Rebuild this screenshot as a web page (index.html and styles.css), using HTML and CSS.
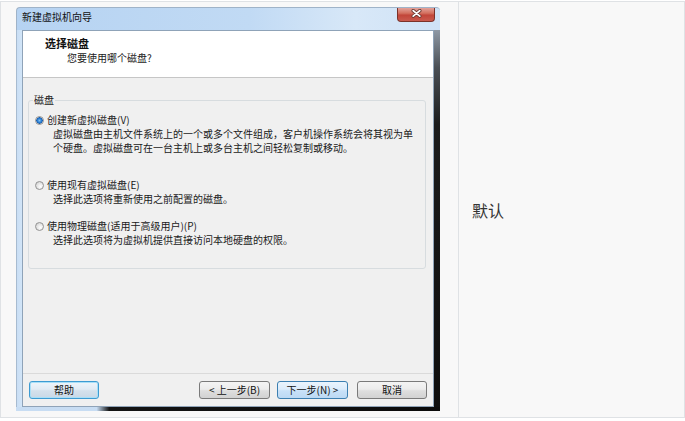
FILE: index.html
```html
<!DOCTYPE html>
<html lang="zh-CN">
<head>
<meta charset="utf-8">
<link rel="stylesheet" href="styles.css">
</head>
<body>
<div class="tbl">
  <div class="cell cell-img">
    <div class="window">
      <div class="titlebar">
        <span class="title">新建虚拟机向导</span>
        <div class="close">
          <svg width="11" height="9" viewBox="0 0 11 9">
            <path d="M2.2 1.6 L8.8 7.2 M8.8 1.6 L2.2 7.2" stroke="#6b3a34" stroke-width="3.4" stroke-linecap="round"/>
            <path d="M2.2 1.6 L8.8 7.2 M8.8 1.6 L2.2 7.2" stroke="#ffffff" stroke-width="1.7" stroke-linecap="round"/>
          </svg>
        </div>
      </div>
      <div class="frame-row">
        <div class="frame-left"></div>
        <div class="client">
          <div class="header">
            <div class="h-title">选择磁盘</div>
            <div class="h-sub">您要使用哪个磁盘?</div>
          </div>
          <div class="body">
            <fieldset class="group">
              <legend>磁盘</legend>
              <div class="opt opt1"><span class="radio checked"></span><span>创建新虚拟磁盘(V)</span></div>
              <div class="desc">虚拟磁盘由主机文件系统上的一个或多个文件组成，客户机操作系统会将其视为单<br>个硬盘。虚拟磁盘可在一台主机上或多台主机之间轻松复制或移动。</div>
              <div class="opt opt2"><span class="radio"></span><span>使用现有虚拟磁盘(E)</span></div>
              <div class="desc">选择此选项将重新使用之前配置的磁盘。</div>
              <div class="opt opt3"><span class="radio"></span><span>使用物理磁盘(适用于高级用户)(P)</span></div>
              <div class="desc">选择此选项将为虚拟机提供直接访问本地硬盘的权限。</div>
            </fieldset>
          </div>
          <div class="footer">
            <div class="btn btn-focus btn-help">帮助</div>
            <div class="spacer"></div>
            <div class="btn btn-back">&lt; 上一步(B)</div>
            <div class="btn btn-default btn-next">下一步(N) &gt;</div>
            <div class="btn btn-cancel">取消</div>
          </div>
        </div>
        <div class="frame-right"></div>
      </div>
      <div class="frame-bottom"></div>
    </div>
  </div>
  <div class="cell cell-text">默认</div>
</div>
</body>
</html>
```

FILE: styles.css
```css
* { box-sizing: border-box; }
html, body { margin: 0; padding: 0; background: #ffffff; }
body { font-family: "Noto Sans CJK SC", "Microsoft YaHei", sans-serif; color: #1a1a1a; }

.tbl {
  display: grid;
  grid-template-columns: 458px 226px;
  width: 685px;
  margin-top: 1px;
  border-top: 1px solid #dfe2e5;
  border-left: 1px solid #dfe2e5;
}
.cell {
  background: #f8f8f8;
  border-right: 1px solid #dfe2e5;
  border-bottom: 1px solid #dfe2e5;
  height: 416px;
}
.cell-img { padding: 5px 0 0 15px; }
.cell-text {
  display: flex;
  align-items: center;
  padding-left: 13px;
  font-size: 16px;
  color: #333333;
}

/* window */
.window { width: 424px; display: flex; flex-direction: column; }
.titlebar {
  height: 23px;
  display: flex;
  justify-content: space-between;
  align-items: flex-start;
  border-top: 1px solid #9fb3c8;
  border-left: 1px solid #9fb3c8;
  border-radius: 4px 4px 0 0;
  background: linear-gradient(to right, #b6d3f2 0%, #c1daf4 55%, #d8e8f8 80%, #cfe2f6 100%);
}
.title {
  font-size: 10px;
  line-height: 14px;
  padding: 2px 0 0 5px;
  color: #101010;
}
.close {
  width: 38px;
  height: 14px;
  margin-right: 5px;
  border: 1px solid #7c3229;
  border-top: none;
  border-radius: 0 0 4px 4px;
  background: linear-gradient(#e3a29a 0%, #d3705f 40%, #c2463a 55%, #c95a4e 100%);
  display: flex;
  align-items: center;
  justify-content: center;
  padding-bottom: 2px;
}
.close svg { display: block; }

.frame-row { display: flex; height: 377px; }
.frame-left {
  width: 6px;
  background: linear-gradient(to right, #a7bbd0 0, #a7bbd0 1px, #c9def4 1px, #d2e5f8 100%);
}
.frame-right {
  width: 6px;
  background: linear-gradient(to bottom, #8f99a5 0%, #4a4f55 10%, #1c1c1c 25%, #0e0e0e 100%);
}
.frame-bottom {
  height: 4px;
  background: linear-gradient(to right, #c8ddf3 0%, #c8ddf3 19%, #141414 22%, #0b0b0b 100%);
}

.client {
  width: 412px;
  border: 1px solid #8fa3b8;
  background: #f0f0f0;
  display: flex;
  flex-direction: column;
}
.header {
  height: 47px;
  background: #ffffff;
  border-bottom: 1px solid #c6c6c6;
  padding: 5px 0 0 22px;
}
.h-title { font-size: 11px; line-height: 14px; font-weight: bold; color: #111; }
.h-sub { font-size: 10px; line-height: 14px; margin-top: 1px; padding-left: 22px; }

.body { height: 295px; padding: 15px 7px 0 5px; }
.group {
  margin: 0;
  padding: 0 0 21px 0;
  border: 1px solid #d7dcdf;
  border-radius: 3px;
  min-width: 0;
}
.group legend {
  font-size: 10px;
  line-height: 14px;
  margin-left: 4px;
  padding: 0 1px;
}
.opt {
  display: flex;
  align-items: center;
  font-size: 10px;
  line-height: 14px;
  padding-left: 6px;
  white-space: nowrap;
}
.opt1 { margin-top: 6px; }
.opt2 { margin-top: 23px; }
.opt3 { margin-top: 13px; }
.radio {
  width: 9px;
  height: 9px;
  border-radius: 50%;
  border: 1px solid #939393;
  background: radial-gradient(circle at 65% 65%, #ffffff 0%, #e6e6e6 50%, #c9c9c9 100%);
  margin-right: 3px;
  flex: none;
}
.radio.checked {
  background: radial-gradient(circle at 50% 50%, #7fc0f2 0px, #2a7fd4 2px, #1d5fae 3px, #f2f2f2 3.5px, #dcdcdc 100%);
}
.desc {
  font-size: 10px;
  line-height: 14px;
  padding-left: 24px;
  white-space: nowrap;
}

.footer {
  height: 33px;
  border-top: 1px solid #dadada;
  display: flex;
  align-items: flex-start;
  padding: 7px 6px 0 6px;
}
.spacer { flex: 1; }
.btn {
  height: 18px;
  font-size: 10px;
  line-height: 16px;
  text-align: center;
  border: 1px solid #7a7a7a;
  border-radius: 3px;
  background: linear-gradient(#f4f4f4 0%, #ececec 45%, #dedede 55%, #d2d2d2 100%);
  color: #111;
  white-space: nowrap;
}
.btn-help { width: 70px; }
.btn-back { width: 71px; }
.btn-next { width: 71px; margin-left: 7px; }
.btn-cancel { width: 70px; margin-left: 9px; }
.btn-focus {
  border-color: #3d9bd2;
  box-shadow: inset 0 0 0 1px #a9dff7;
  background: linear-gradient(#eef5fb 0%, #e1ebf4 45%, #d4e1ec 55%, #c9d8e6 100%);
}
.btn-default {
  border-color: #3c7fb1;
  background: linear-gradient(#eaf4fd 0%, #dcecfb 45%, #c8e1f8 55%, #bcd9f4 100%);
}
```
